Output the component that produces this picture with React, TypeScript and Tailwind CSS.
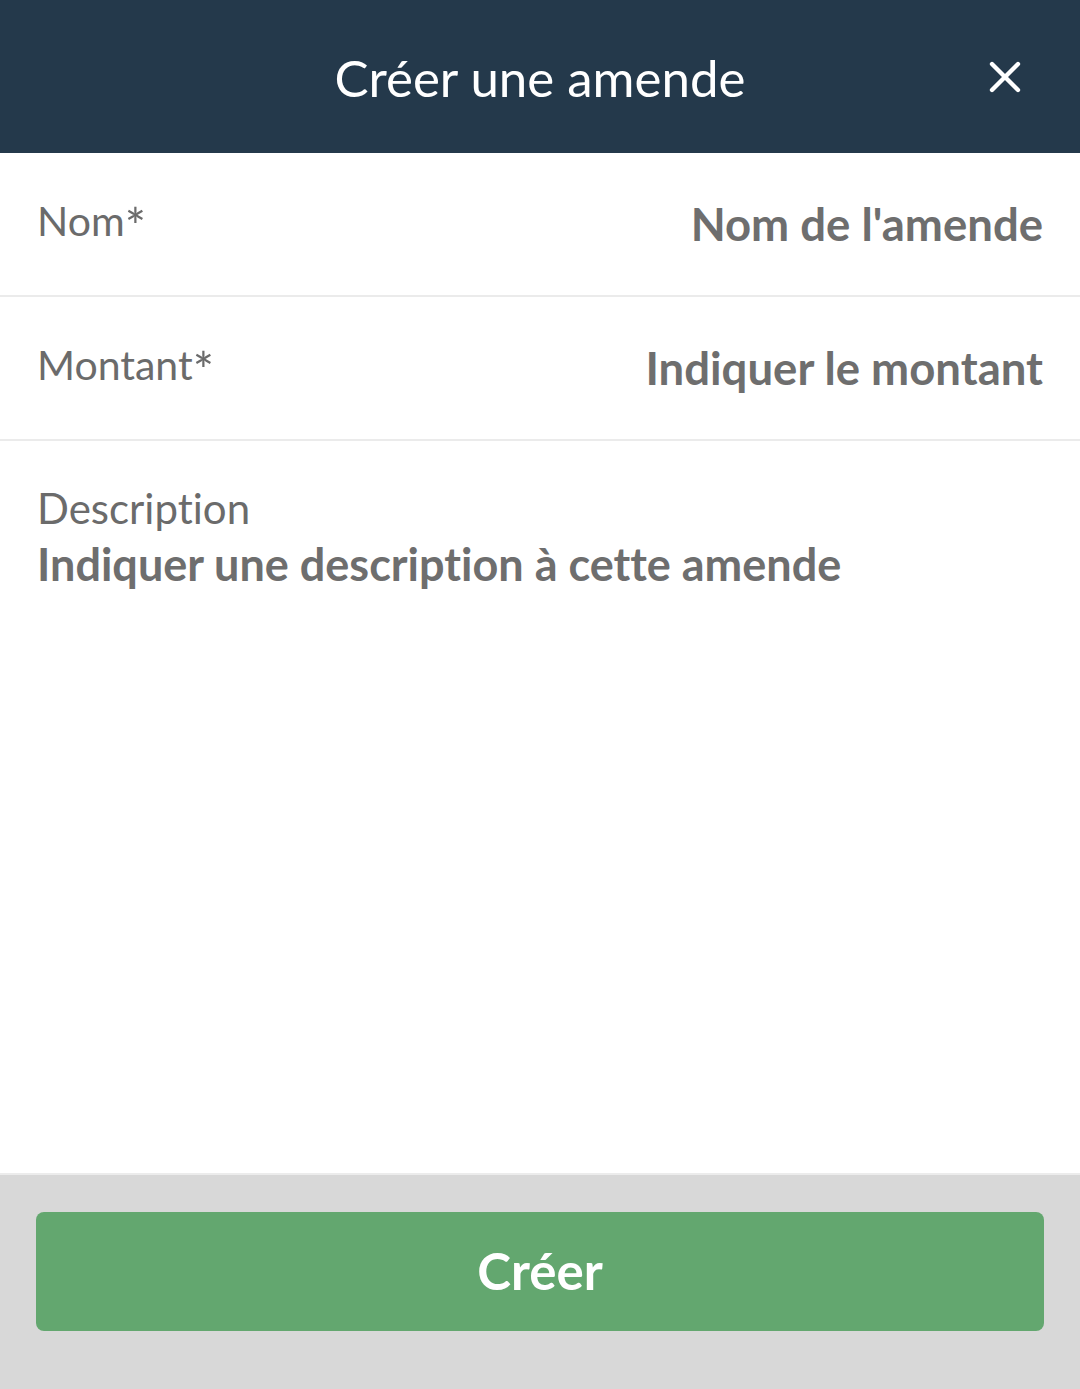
import { X } from "lucide-react";

const font = { fontFamily: "Lato, 'Noto Sans', sans-serif" };

function Star() {
  return <span className="relative top-[9px] text-[50px] leading-none">*</span>;
}

function FieldRow({ label, placeholder }: { label: string; placeholder: string }) {
  return (
    <div className="flex h-[144px] items-center justify-between border-b-2 border-[#ebebeb] px-[37px]">
      <span className="-mt-[8px] text-[41px] leading-[56px] text-[#6b6b6b]">
        {label}
        <Star />
      </span>
      <span className="text-[45.5px] font-bold text-[#6e6e6e]">{placeholder}</span>
    </div>
  );
}

export default function App() {
  return (
    <div
      className="flex h-[1389px] flex-col bg-white [font-variant-ligatures:none]"
      style={font}
    >
      <header className="relative flex h-[153px] shrink-0 items-center justify-center bg-[#24394b]">
        <h1 className="mt-[4px] text-[51px] text-white">Créer une amende</h1>
        <button className="absolute right-[49px] top-[51px] text-white">
          <X size={52} strokeWidth={2} />
        </button>
      </header>

      <FieldRow label="Nom" placeholder="Nom de l'amende" />
      <FieldRow label="Montant" placeholder="Indiquer le montant" />

      <div className="flex-1 px-[37px] pt-[39px]">
        <p className="text-[42px] leading-[56px] text-[#6b6b6b]">Description</p>
        <p className="text-[45px] font-bold leading-[57px] text-[#6e6e6e]">
          Indiquer une description à cette amende
        </p>
      </div>

      <footer className="flex h-[216px] shrink-0 flex-col border-t-2 border-[#ececec] bg-[#d8d8d8] px-[36px] pt-[37px]">
        <button className="h-[119px] w-full rounded-[8px] bg-[#63a76f] text-[51px] font-bold text-white">
          Créer
        </button>
      </footer>
    </div>
  );
}
